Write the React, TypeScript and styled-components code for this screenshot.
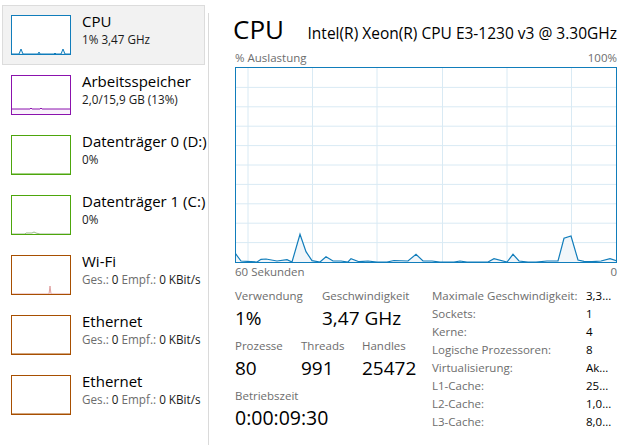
import React from "react"
import styled, { createGlobalStyle } from "styled-components"

const GlobalStyle = createGlobalStyle`
  html, body {
    margin: 0;
    padding: 0;
    background: #fff;
  }
  body {
    font-family: "Open Sans", "Noto Sans", sans-serif;
    color: #000;
  }
`

const Page = styled.div`
  display: flex;
  width: 637px;
  height: 445px;
  overflow: hidden;
`

const Sidebar = styled.div`
  display: flex;
  width: 209px;
  flex-shrink: 0;
`

const ItemList = styled.div`
  display: flex;
  flex-direction: column;
  padding: 5px 0 0 2px;
  width: 206px;
`

const Divider = styled.div`
  width: 1px;
  margin-top: 13px;
  background: #dadada;
`

const Item = styled.div<{ $selected?: boolean }>`
  display: flex;
  align-items: flex-start;
  box-sizing: border-box;
  width: 203px;
  height: 60px;
  padding: 9px 8px;
  gap: 11px;
  border: 1px solid ${(p) => (p.$selected ? "#dcdcdc" : "transparent")};
  background: ${(p) => (p.$selected ? "#f2f2f2" : "transparent")};
`

const Thumb = styled.div<{ $color: string }>`
  box-sizing: border-box;
  width: 60px;
  height: 40px;
  flex-shrink: 0;
  border: 1px solid ${(p) => p.$color};
  background: #fff;

  svg {
    display: block;
  }
`

const ItemText = styled.div`
  display: flex;
  flex-direction: column;
  margin-top: -4px;
  white-space: nowrap;
`

const ItemTitle = styled.div`
  font-size: 15px;
  line-height: 20px;
`

const ItemSub = styled.div`
  font-size: 11.7px;
  line-height: 16px;
  color: #1a1a1a;
`

const Dim = styled.span`
  color: #6d6d6d;
`

const Main = styled.div`
  flex: 1;
  display: flex;
  flex-direction: column;
  padding: 13px 20px 0 26px;
  min-width: 0;
`

const Header = styled.div`
  display: flex;
  align-items: baseline;
  justify-content: space-between;
  white-space: nowrap;
`

const BigTitle = styled.div`
  font-size: 26px;
  line-height: 32px;
  margin-left: -2px;
`

const Model = styled.div`
  font-size: 15.5px;
  line-height: 20px;
`

const AxisRow = styled.div<{ $top: number }>`
  display: flex;
  justify-content: space-between;
  font-size: 11.5px;
  line-height: 16px;
  color: #6d6d6d;
  margin-top: ${(p) => p.$top}px;
`

const Chart = styled.div`
  box-sizing: border-box;
  width: 382px;
  height: 196px;
  margin-top: 1px;
  border: 1px solid #117dbb;

  svg {
    display: block;
  }
`

const Lower = styled.div`
  display: flex;
  margin-top: 8px;
`

const Stats = styled.div`
  display: flex;
  flex-direction: column;
  gap: 8px;
  width: 197px;
  flex-shrink: 0;
`

const StatRow = styled.div`
  display: flex;
`

const Stat = styled.div<{ $w?: number }>`
  display: flex;
  flex-direction: column;
  gap: 2px;
  width: ${(p) => (p.$w ? `${p.$w}px` : "auto")};
  white-space: nowrap;
`

const StatLabel = styled.div`
  font-size: 11.5px;
  line-height: 16px;
  color: #6d6d6d;
`

const StatValue = styled.div<{ $size?: number }>`
  font-size: ${(p) => p.$size ?? 19}px;
  line-height: 24px;
`

const Table = styled.div`
  display: grid;
  grid-template-columns: 154px auto;
  grid-auto-rows: 18px;
  margin-top: -1px;
  font-size: 11.5px;
  line-height: 18px;
  white-space: nowrap;
`

const Key = styled.div`
  color: #6d6d6d;
`

const Val = styled.div`
  color: #000;
`

const cpuPoints: [number, number][] = [
  [235, 253], [241, 261], [257, 262], [261, 259.3], [266, 259], [277, 261], [287, 259.7],
  [292, 262], [300, 234.3], [306, 251.7], [312, 260.7], [320, 262], [326, 256.7], [333, 261],
  [341, 261], [348, 262], [351, 258.7], [359, 261.7], [368, 261], [377, 262], [387, 262],
  [394, 260.5], [408, 261], [416, 254.3], [423, 261], [432, 261], [440, 262], [454, 262],
  [460, 261], [467, 262], [488, 262], [494, 258.7], [507, 262], [513, 254.3], [519, 261],
  [528, 262], [536, 262], [547, 261], [558, 261], [564, 238.3], [571, 236], [578, 260],
  [584, 261.3], [592, 261.7], [601, 261], [610, 258.7], [617, 261],
]

const CpuChart = () => {
  const w = 380
  const h = 194
  const pts = cpuPoints.map(([x, y]) => [x - 236, y - 68])
  const line = pts.map(([x, y]) => `${x},${y}`).join(" ")
  const area = `${pts[0][0]},${h} ${line} ${pts[pts.length - 1][0]},${h}`
  const rows = Array.from({ length: 9 }, (_, i) => (h / 10) * (i + 1))
  const cols = [12, 76.5, 141, 206.5, 271, 335.5]
  return (
    <svg width={w} height={h} viewBox={`0 0 ${w} ${h}`}>
      {rows.map((y) => (
        <line key={`r${y}`} x1={0} x2={w} y1={y} y2={y} stroke="#d9eaf4" strokeWidth={1} />
      ))}
      {cols.map((x) => (
        <line key={`c${x}`} x1={x} x2={x} y1={0} y2={h} stroke="#d9eaf4" strokeWidth={1} />
      ))}
      <polygon points={area} fill="#f1f6fa" />
      <polyline points={line} fill="none" stroke="#117dbb" strokeWidth={1.2} />
    </svg>
  )
}

const Mini = ({ color, points, fill }: { color: string; points: string; fill?: string }) => (
  <svg width={58} height={38} viewBox="0 0 58 38">
    {fill && <polygon points={`0,38 ${points} 58,38`} fill={fill} />}
    <polyline points={points} fill="none" stroke={color} strokeWidth={1} />
  </svg>
)

interface Device {
  name: string
  color: string
  sub: React.ReactNode
  points: string
  fill?: string
  stroke?: string
}

const net = (
  <>
    <Dim>Ges.:</Dim> 0 <Dim>Empf.:</Dim> 0 KBit/s
  </>
)

const devices: Device[] = [
  {
    name: "CPU",
    color: "#117dbb",
    sub: "1% 3,47 GHz",
    points: "0,38 7,38 9,33 11,38 26,38 27,36 28,38 42,38 43,37 44,38 49,38 51,33 53,38 58,38",
    fill: "#e6f0f7",
  },
  {
    name: "Arbeitsspeicher",
    color: "#8b12ae",
    sub: "2,0/15,9 GB (13%)",
    points: "0,33 18,33 19,32 20,33 28,33 29,32 30,33 58,33",
    fill: "#f9f1fb",
  },
  { name: "Datenträger 0 (D:)", color: "#4da60c", sub: "0%", points: "0,38 58,38" },
  {
    name: "Datenträger 1 (C:)",
    color: "#4da60c",
    sub: "0%",
    points: "0,38 13,38 14,37 20,37 22,36 24,37 28,38 58,38",
    stroke: "#9bb88a",
  },
  {
    name: "Wi-Fi",
    color: "#a74f01",
    sub: net,
    points: "0,38 37,38 38,30 39,38 58,38",
    stroke: "#e0a0a0",
  },
  { name: "Ethernet", color: "#a74f01", sub: net, points: "0,38 58,38" },
  { name: "Ethernet", color: "#a74f01", sub: net, points: "0,38 58,38" },
]

const details: [string, string][] = [
  ["Maximale Geschwindigkeit:", "3,3..."],
  ["Sockets:", "1"],
  ["Kerne:", "4"],
  ["Logische Prozessoren:", "8"],
  ["Virtualisierung:", "Ak..."],
  ["L1-Cache:", "25..."],
  ["L2-Cache:", "1,0..."],
  ["L3-Cache:", "8,0..."],
]

const App = () => {
  return (
    <>
      <GlobalStyle />
      <Page>
        <Sidebar>
          <ItemList>
            {devices.map((d, i) => (
              <Item key={i} $selected={i === 0}>
                <Thumb $color={d.color}>
                  <Mini color={d.stroke ?? d.color} points={d.points} fill={d.fill} />
                </Thumb>
                <ItemText>
                  <ItemTitle>{d.name}</ItemTitle>
                  <ItemSub>{d.sub}</ItemSub>
                </ItemText>
              </Item>
            ))}
          </ItemList>
          <Divider />
        </Sidebar>

        <Main>
          <Header>
            <BigTitle>CPU</BigTitle>
            <Model>Intel(R) Xeon(R) CPU E3-1230 v3 @ 3.30GHz</Model>
          </Header>
          <AxisRow $top={5}>
            <span>% Auslastung</span>
            <span>100%</span>
          </AxisRow>
          <Chart>
            <CpuChart />
          </Chart>
          <AxisRow $top={1}>
            <span>60 Sekunden</span>
            <span>0</span>
          </AxisRow>

          <Lower>
            <Stats>
              <StatRow>
                <Stat $w={87}>
                  <StatLabel>Verwendung</StatLabel>
                  <StatValue>1%</StatValue>
                </Stat>
                <Stat>
                  <StatLabel>Geschwindigkeit</StatLabel>
                  <StatValue>3,47 GHz</StatValue>
                </Stat>
              </StatRow>
              <StatRow>
                <Stat $w={66}>
                  <StatLabel>Prozesse</StatLabel>
                  <StatValue>80</StatValue>
                </Stat>
                <Stat $w={61}>
                  <StatLabel>Threads</StatLabel>
                  <StatValue>991</StatValue>
                </Stat>
                <Stat>
                  <StatLabel>Handles</StatLabel>
                  <StatValue>25472</StatValue>
                </Stat>
              </StatRow>
              <StatRow>
                <Stat>
                  <StatLabel>Betriebszeit</StatLabel>
                  <StatValue $size={19.5}>0:00:09:30</StatValue>
                </Stat>
              </StatRow>
            </Stats>

            <Table>
              {details.map(([k, v]) => (
                <React.Fragment key={k}>
                  <Key>{k}</Key>
                  <Val>{v}</Val>
                </React.Fragment>
              ))}
            </Table>
          </Lower>
        </Main>
      </Page>
    </>
  )
}

export default App
